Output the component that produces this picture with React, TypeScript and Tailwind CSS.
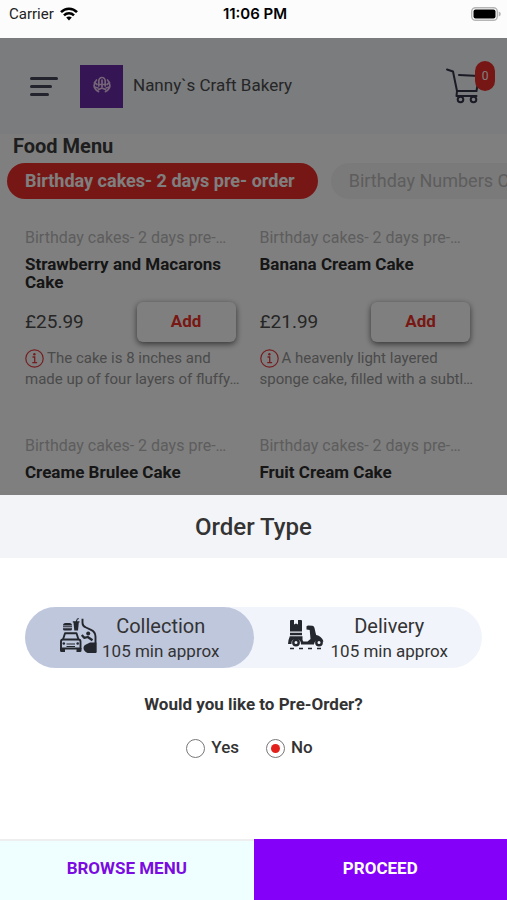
import { useState } from "react";

type Cake = {
  name: string;
  price?: string;
  description?: string;
};

const cakes: Cake[] = [
  { name: "Strawberry and Macarons Cake", price: "£25.99", description: "The cake is 8 inches and made up of four layers of fluffy…" },
  { name: "Banana Cream Cake", price: "£21.99", description: "A heavenly light layered sponge cake, filled with a subtl…" },
  { name: "Creame Brulee Cake" },
  { name: "Fruit Cream Cake" },
];

function WifiIcon() {
  return (
    <svg viewBox="0 0 18 14" className="h-[14px] w-[18px]" fill="none" stroke="#000" aria-hidden="true">
      <path d="M1 5.2C5.5.6 12.500.6 17 5.2" strokeWidth="2.600" />
      <path d="M4 8.300C6.800 5.500 11.200 5.500 14 8.300" strokeWidth="2.500" />
      <path d="M6.200 10.600C7.800 9 10.200 9 11.800 10.600L9 13.600Z" fill="#000" stroke="none" />
    </svg>
  );
}

function BatteryIcon() {
  return (
    <svg viewBox="0 0 30 14" className="h-[14px] w-[30px]" aria-hidden="true">
      <rect x=".7" y=".7" width="25.600" height="12.600" rx="3.800" fill="#fff" stroke="#b5b5b5" strokeWidth="1.400" />
      <rect x="2.500" y="2.500" width="22" height="9" rx="2" fill="#000" />
      <path d="M27.700 4.500c1.600.4 2 1.400 2 2.500s-.4 2.100-2 2.500z" fill="#b5b5b5" />
    </svg>
  );
}

function CartIcon() {
  return (
    <svg viewBox="0 0 34 36" className="h-9 w-[34px]" fill="none" stroke="#34364a" strokeWidth="2" strokeLinecap="round" strokeLinejoin="round" aria-hidden="true">
      <path d="M1 1.500 7 3.500 11 23H30.500L33 8L13 7" />
      <path d="M11 23 10.500 28H30.500" />
      <circle cx="14.500" cy="31.500" r="2.800" />
      <circle cx="27.500" cy="31.500" r="2.800" />
    </svg>
  );
}

function LogoMark() {
  return (
    <svg viewBox="0 0 18 20" className="h-5 w-[18px]" fill="none" stroke="#e9c9ee" strokeWidth="1.700" strokeLinecap="round" aria-hidden="true">
      <path d="M3.500 4C-.2 8 .5 13 5.500 15.500M14.500 4c3.700 4 3 9-2 11.500" />
      <path d="M1.500 6.500 4 8.500M1.500 11l3.500 1M16.500 6.500l-2.500 2M16.500 11 13 12" />
      <path d="M5.800 10V5a3.200 3.500 0 0 1 6.400 0v5M9 4v7M6 8.500h6M5.500 13.500l3.500-1.500 3.500 1.500" />
    </svg>
  );
}

function InfoIcon() {
  return (
    <svg viewBox="0 0 19 19" className="mr-[3px] inline-block h-[19px] w-[19px] align-[-5px]" fill="none" stroke="#e83a40" aria-hidden="true">
      <circle cx="9.500" cy="9.500" r="8.700" strokeWidth="1.200" />
      <path d="M7.500 8h2.200v5.500M7.300 13.700h4.800" strokeWidth="1.300" />
      <circle cx="9.400" cy="5.200" r="1.200" fill="#e83a40" stroke="none" />
    </svg>
  );
}

function CollectionIcon() {
  return (
    <svg viewBox="0 0 38 40" className="h-10 w-[38px] shrink-0" fill="#25272e" aria-hidden="true">
      <path d="M4 7.500Q4 5 6.500 5h4Q13 5 13 7.500zM4 8.300h9v1H4zM4 10.200h9V11q0 1.500-1.500 1.500h-6Q4 12.500 4 11z" />
      <path d="M13.800 3.200h3L18 .5l2-.3v.9l-1.400.3-.6 1.800h2.500v1.300h-.7l-.8 8h-3.700l-.8-8h-.7z" />
      <g fill="none" stroke="#25272e" strokeWidth="1.900" strokeLinejoin="round">
        <path d="M4 21.500 6 15.300h11.500l2 6.200" />
        <path d="M2 30.500V23.500q0-2 2-2h15.500q2 0 2 2v7z" />
        <path d="M7.500 26h8.500M7.500 28.500h8.500" strokeWidth="1.100" />
        <path d="M22.800 17l2.400 2.800 3.500-.8 4.800 3.200" strokeWidth="2.300" />
        <path d="M23.500.8V5q0 3 3.500 4.500l5 2.300q4.500 2 4.500 7V34" />
      </g>
      <path d="M1 30h5v4H2.500Q1 34 1 32.500zM17.500 30h5v2.500q0 1.500-1.500 1.500h-3.500z" />
      <circle cx="4.800" cy="25.500" r="1.300" />
      <circle cx="18.700" cy="25.500" r="1.300" />
      <circle cx="29.200" cy="15.600" r="2" />
      <path d="M37.400 24.500H31l-3 1.500q-3.500 1-3.500 4 0 3 4 5h8.900z" />
    </svg>
  );
}

function ScooterIcon() {
  return (
    <svg viewBox="0 0 38 36" className="h-9 w-[38px] shrink-0" fill="#25272e" aria-hidden="true">
      <path d="M2 1Q2 0 3 0h3v4.500l2-1 2 1V0h3q1 0 1 1v10.500H2zM2 12.700h12v2.500H2z" />
      <path d="M2 16.300h12.500V20l.8 1.500h4.200L22.500 19l-.8-9-3.200-.5V6.200L20 5.500l4.500.2q1.700.3 2 2.300l1 4.500.7 2.500q5.500 1 7.300 6.500l-1.200.2q-3.300-3.700-6.800-.7-1.500 1.500-1.500 3.500H13q0-5.500-5-5.500t-4.500 5H0q.3-4.500 2-8.200z" />
      <circle cx="8" cy="22.500" r="2.700" fill="none" stroke="#25272e" strokeWidth="2.400" />
      <circle cx="31" cy="22.500" r="2.700" fill="none" stroke="#25272e" strokeWidth="2.400" />
      <path d="M2 28.500h4M11 28.500h4M20 28.500h4M29 28.500h4" stroke="#25272e" strokeWidth="1.300" />
    </svg>
  );
}

function StatusBar() {
  return (
    <div className="grid h-[38px] shrink-0 grid-cols-3 items-start bg-[#fcfcfc] pt-1 pr-[6px] pl-[9px] text-base leading-5 text-black">
      <div className="flex items-center gap-[6px]">
        <span className="text-[15px] text-[#222]">Carrier</span>
        <WifiIcon />
      </div>
      <div className="text-center font-['Inter'] text-[15px] font-semibold whitespace-nowrap">11:06 PM</div>
      <div className="flex h-5 items-center justify-end">
        <BatteryIcon />
      </div>
    </div>
  );
}

function CakeCard({ cake }: { cake: Cake }) {
  return (
    <article className="flex h-52 min-w-0 flex-col pr-6">
      <p className="truncate text-base leading-5 text-[#bbb]">Birthday cakes- 2 days pre-…</p>
      <h3 className="mt-[7px] h-9 text-[17px] leading-[18px] font-bold text-[#2c2c2c]">{cake.name}</h3>
      {cake.price && (
        <div className="mt-[11px] flex items-center justify-between">
          <span className="text-[19px] leading-7 text-[#4c4c4c]">{cake.price}</span>
          <button type="button" className="h-10 w-[99px] rounded-md bg-white text-[17px] font-bold text-[#f03028] shadow-[0_2px_6px_rgba(0,0,0,0.6)]">
            Add
          </button>
        </div>
      )}
      {cake.description && (
        <p className="mt-[6px] -mr-[6px] line-clamp-2 text-[15px] leading-[21px] text-[#959595]">
          <InfoIcon />
          {cake.description}
        </p>
      )}
    </article>
  );
}

function MenuPage() {
  return (
    <div className="flex-1">
      <header className="flex h-24 items-center bg-[#f5f8fc] pr-3 pl-[30px]">
        <button type="button" aria-label="Open menu" className="flex w-7 flex-col gap-[5px]">
          <span className="h-[3px] w-7 rounded-full bg-[#44465a]" />
          <span className="h-[3px] w-[22px] rounded-full bg-[#44465a]" />
          <span className="h-[3px] w-[19px] rounded-full bg-[#44465a]" />
        </button>
        <div className="ml-[22px] flex h-[43px] w-[43px] items-center justify-center bg-[#6b2aa8]">
          <LogoMark />
        </div>
        <h1 className="ml-[10px] text-[17px] text-[#4c4c4c]">Nanny`s Craft Bakery</h1>
        <button type="button" aria-label="Cart, 0 items" className="relative ml-auto w-[49px]">
          <CartIcon />
          <span className="absolute -top-[7px] right-0 flex h-[30px] w-5 items-center justify-center rounded-full bg-[#ee2e2a] text-xs text-white">0</span>
        </button>
      </header>
      <h2 className="pl-[13px] text-xl leading-6 font-bold text-[#3c3c3c]">Food Menu</h2>
      <nav className="mt-[5px] flex gap-[13px] overflow-hidden pl-[7px]">
        <button type="button" className="h-9 shrink-0 rounded-full bg-[#ee2e2a] pr-[23px] pl-[18px] text-lg font-bold text-white">Birthday cakes- 2 days pre- order</button>
        <button type="button" className="h-9 shrink-0 rounded-full bg-[#f5f5f5] px-[18px] text-lg text-[#bbb]">Birthday Numbers Cakes</button>
      </nav>
      <section className="grid grid-cols-2 pt-[29px] pr-[13px] pl-[25px]">
        {cakes.map((cake) => (
          <CakeCard key={cake.name} cake={cake} />
        ))}
      </section>
    </div>
  );
}

function OrderSheet() {
  const [type, setType] = useState("collection");
  const [preOrder, setPreOrder] = useState("no");
  const option = "flex h-[61px] flex-1 items-center justify-center rounded-full text-[#333]";
  const radio =
    "h-[19px] w-[19px] appearance-none rounded-full border border-[#777] bg-white bg-clip-content p-1 checked:bg-[#e3211c]";
  return (
    <div role="dialog" aria-modal="true" aria-labelledby="order-title" className="absolute inset-x-0 bottom-0 flex flex-col bg-white">
      <h2 id="order-title" className="flex h-[63px] items-center justify-center bg-[#f3f4f7] text-2xl font-medium text-[#333]">
        Order Type
      </h2>
      <div className="mx-[25px] mt-[49px] flex rounded-full bg-[#f2f4fc]">
        <button type="button" aria-pressed={type === "collection"} onClick={() => setType("collection")} className={`${option} ${type === "collection" ? "bg-[#bfc7dd]" : ""}`}>
          <CollectionIcon />
          <span className="ml-[5px] flex flex-col">
            <span className="text-xl leading-[26px]">Collection</span>
            <span className="text-[17px] leading-6">105 min approx</span>
          </span>
        </button>
        <button type="button" aria-pressed={type === "delivery"} onClick={() => setType("delivery")} className={`${option} ${type === "delivery" ? "bg-[#bfc7dd]" : ""}`}>
          <ScooterIcon />
          <span className="ml-[5px] flex flex-col">
            <span className="text-xl leading-[26px]">Delivery</span>
            <span className="text-[17px] leading-6">105 min approx</span>
          </span>
        </button>
      </div>
      <fieldset className="mt-6">
        <legend className="w-full text-center text-[17px] leading-6 font-bold text-[#333]">Would you like to Pre-Order?</legend>
        <div className="mt-5 flex h-6 items-center justify-center gap-[27px] pr-2 text-[17px] font-medium text-[#333]">
          <label className="flex items-center gap-[6px]">
            <input type="radio" name="pre-order" className={radio} checked={preOrder === "yes"} onChange={() => setPreOrder("yes")} />
            Yes
          </label>
          <label className="flex items-center gap-[6px]">
            <input type="radio" name="pre-order" className={radio} checked={preOrder === "no"} onChange={() => setPreOrder("no")} />
            No
          </label>
        </div>
      </fieldset>
      <div className="mt-[79px] grid h-[61px] grid-cols-2 text-[17px] font-bold">
        <button type="button" className="border-t-2 border-[#eeeeee] bg-[#efffff] pb-[3px] text-[#7b0be0]">BROWSE MENU</button>
        <button type="button" className="bg-[#8500f8] pb-px text-white">PROCEED</button>
      </div>
    </div>
  );
}

export default function App() {
  return (
    <div className="relative flex h-screen flex-col overflow-hidden bg-white font-['Roboto','Liberation_Sans',sans-serif]">
      <StatusBar />
      <div className="relative flex min-h-0 flex-1 flex-col overflow-hidden">
        <MenuPage />
        <div className="absolute inset-0 bg-black/50" />
        <OrderSheet />
      </div>
    </div>
  );
}
